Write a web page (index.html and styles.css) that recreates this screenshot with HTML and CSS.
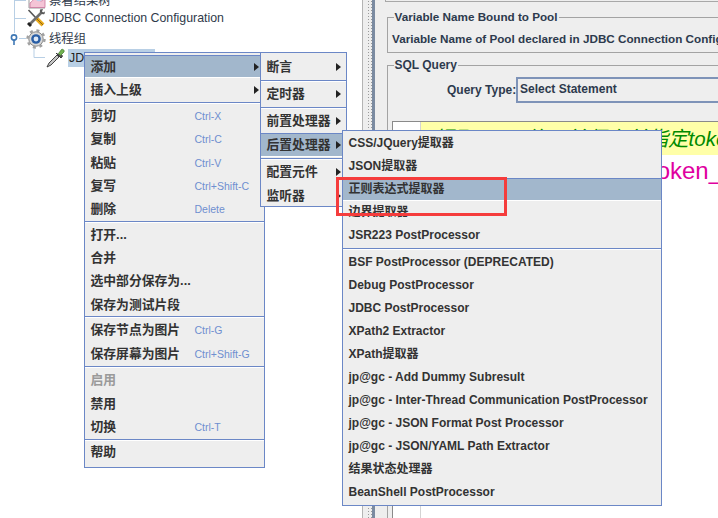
FILE: index.html
```html
<!DOCTYPE html>
<html lang="zh">
<head>
<meta charset="utf-8">
<title>JMeter</title>
<link rel="stylesheet" href="styles.css">
</head>
<body>
<div class="app">
  <section class="tree">
    <svg class="tree-lines" width="70" height="70" viewBox="0 0 70 70">
      <path d="M14.500 0V33M14.500 0.500H26M14.500 18.500H26M19 38.500H26M34 45V57.500H45" fill="none" stroke="#b8cfe5"/>
      <circle cx="14" cy="37.500" r="2.600" fill="#fff" stroke="#3f78b5" stroke-width="1.600"/>
      <path d="M14 40V45" stroke="#3f78b5" stroke-width="1.600"/>
    </svg>
    <div class="row row-chart">
      <svg class="ico" width="18" height="18" viewBox="0 0 18 18"><path d="M1 2V16H17" fill="none" stroke="#9a9a9a"/><path d="M2 15.500V11C5 9 6 6 8 6s3 3 5 3 3-2 4-3V15.500z" fill="#f4c4d6" stroke="#c9749a" stroke-width=".8"/><circle cx="11" cy="6" r="3.200" fill="#bcd3ee"/></svg>
      <span>察看结果树</span>
    </div>
    <div class="row row-jdbc">
      <svg class="ico" width="20" height="20" viewBox="0 0 20 20">
        <path d="M2.500 2L10 10" stroke="#555" stroke-width="1.600"/>
        <path d="M9.500 9.500l7.500 7.500" stroke="#e8a91c" stroke-width="4"/>
        <path d="M9.500 9.500l7.500 7.500" stroke="#6b4b08" stroke-width=".7"/>
        <path d="M16 4L3 17" stroke="#6e6e6e" stroke-width="2.600"/>
        <path d="M14 1.500a3.500 3.500 0 0 0 4.500 4.500l.5-2.500-2 1-1-1 1-2.500z" fill="#5a5a5a"/>
        <path d="M1 16l3 3 2-2-3-3z" fill="#222"/>
      </svg>
      <span>JDBC Connection Configuration</span>
    </div>
    <div class="row row-group">
      <svg class="ico" width="20" height="20" viewBox="0 0 20 20">
        <circle cx="10" cy="10" r="7.200" fill="#d8d8d8" stroke="#8a8a8a" stroke-width="1"/>
        <circle cx="10" cy="10" r="8.500" fill="none" stroke="#a0a0a0" stroke-width="2.400" stroke-dasharray="3 3.700"/>
        <circle cx="10" cy="10" r="4.800" fill="#2a5fa6"/><circle cx="10" cy="10" r="2.400" fill="#dfe9f6"/>
      </svg>
      <span>线程组</span>
    </div>
    <div class="row row-sel">
      <svg class="ico" width="20" height="20" viewBox="0 0 20 20">
        <path d="M1 19l2-4L11 7l2 2-8 8z" fill="#c4c4c4" stroke="#333" stroke-width=".9"/>
        <path d="M10 5l5 5 1.500-2L15 6.500" fill="#555" stroke="#333"/>
        <path d="M12.500 5.500l2 2 3.500-3.500c.8-1.500-1-3.300-2.500-2.500z" fill="#72b252" stroke="#3f7a2c" stroke-width=".7"/>
      </svg>
      <span class="sel">JDBC Request</span>
    </div>
  </section>
  <div class="divider"><div class="dots"></div><div class="bar"></div></div>
  <main class="panel">
    <div class="top-box"></div>
    <fieldset class="group group-var">
      <legend>Variable Name Bound to Pool</legend>
      <div class="var-line">Variable Name of Pool declared in JDBC Connection Configuration</div>
    </fieldset>
    <fieldset class="group group-sql">
      <legend>SQL Query</legend>
      <div class="query-row">
        <label class="query-label">Query Type:</label>
        <div class="combo">Select Statement</div>
      </div>
      <div class="editor">
        <div class="gutter"></div>
        <div class="code">
          <div class="line-comment">//提取token值，并保存并指定token</div>
          <div class="line-var">token_name</div>
        </div>
      </div>
    </fieldset>
  </main>
</div>

<div class="menu menu-main">
  <div class="item active"><span class="label">添加</span><i class="arrow"></i></div>
  <div class="item"><span class="label">插入上级</span><i class="arrow"></i></div>
  <div class="sep"></div>
  <div class="item"><span class="label">剪切</span><span class="key">Ctrl-X</span></div>
  <div class="item"><span class="label">复制</span><span class="key">Ctrl-C</span></div>
  <div class="item"><span class="label">粘贴</span><span class="key">Ctrl-V</span></div>
  <div class="item"><span class="label">复写</span><span class="key">Ctrl+Shift-C</span></div>
  <div class="item"><span class="label">删除</span><span class="key">Delete</span></div>
  <div class="sep"></div>
  <div class="item"><span class="label">打开...</span></div>
  <div class="item"><span class="label">合并</span></div>
  <div class="item"><span class="label">选中部分保存为...</span></div>
  <div class="item"><span class="label">保存为测试片段</span></div>
  <div class="sep"></div>
  <div class="item"><span class="label">保存节点为图片</span><span class="key">Ctrl-G</span></div>
  <div class="item"><span class="label">保存屏幕为图片</span><span class="key">Ctrl+Shift-G</span></div>
  <div class="sep sep-low"></div>
  <div class="item disabled"><span class="label">启用</span></div>
  <div class="item"><span class="label">禁用</span></div>
  <div class="item"><span class="label">切换</span><span class="key">Ctrl-T</span></div>
  <div class="sep"></div>
  <div class="item"><span class="label">帮助</span></div>
</div>

<div class="menu menu-sub">
  <div class="item"><span class="label">断言</span><i class="arrow"></i></div>
  <div class="sep"></div>
  <div class="item"><span class="label">定时器</span><i class="arrow"></i></div>
  <div class="sep"></div>
  <div class="item"><span class="label">前置处理器</span><i class="arrow"></i></div>
  <div class="item active"><span class="label">后置处理器</span><i class="arrow"></i></div>
  <div class="sep"></div>
  <div class="item"><span class="label">配置元件</span><i class="arrow"></i></div>
  <div class="item"><span class="label">监听器</span><i class="arrow"></i></div>
</div>

<div class="menu menu-post">
  <div class="item"><span class="label">CSS/JQuery提取器</span></div>
  <div class="item"><span class="label">JSON提取器</span></div>
  <div class="item active"><span class="label">正则表达式提取器</span></div>
  <div class="item"><span class="label">边界提取器</span></div>
  <div class="item"><span class="label">JSR223 PostProcessor</span></div>
  <div class="sep"></div>
  <div class="item"><span class="label">BSF PostProcessor (DEPRECATED)</span></div>
  <div class="item"><span class="label">Debug PostProcessor</span></div>
  <div class="item"><span class="label">JDBC PostProcessor</span></div>
  <div class="item"><span class="label">XPath2 Extractor</span></div>
  <div class="item"><span class="label">XPath提取器</span></div>
  <div class="item"><span class="label">jp@gc - Add Dummy Subresult</span></div>
  <div class="item"><span class="label">jp@gc - Inter-Thread Communication PostProcessor</span></div>
  <div class="item"><span class="label">jp@gc - JSON Format Post Processor</span></div>
  <div class="item"><span class="label">jp@gc - JSON/YAML Path Extractor</span></div>
  <div class="item"><span class="label">结果状态处理器</span></div>
  <div class="item"><span class="label">BeanShell PostProcessor</span></div>
</div>

<div class="callout"></div>
</body>
</html>
```

FILE: styles.css
```css
* { box-sizing: border-box; }
html, body { margin: 0; padding: 0; }
body {
  width: 718px;
  height: 518px;
  overflow: hidden;
  background: #fff;
  color: #333;
  font-family: "Liberation Sans", "Noto Sans CJK SC", sans-serif;
  position: relative;
}
.app { display: flex; width: 718px; height: 518px; }

/* tree */
.tree {
  width: 363px;
  flex: none;
  position: relative;
  background: #fff;
  border-right: 1px solid #b4b4b4;
  font-size: 12.350px;
  line-height: 16px;
  color: #2f3a4a;
  margin-top: -6px;
}
.tree-lines { position: absolute; left: 0; top: 6px; }
.row { display: flex; align-items: center; position: relative; }
.row span { white-space: nowrap; }
.ico { flex: none; }
.row-chart { height: 13px; margin-bottom: 2px; padding-left: 28px; gap: 3px; }
.row-jdbc { height: 18px; padding-left: 26px; gap: 3px; }
.row-group { height: 18.500px; margin-top: 2.500px; padding-left: 26px; gap: 3px; }
.row-sel { height: 19px; padding-left: 46px; gap: 2px; }
.sel { background: #b8cfe5; padding: 1px 4px 1px 1px; color: #222; }

/* divider */
.divider { width: 12px; flex: none; display: flex; background: #eee; padding-left: 4px; }
.dots {
  width: 5px;
  background-image: radial-gradient(circle, #9a9a9a 0.6px, transparent 0.8px);
  background-size: 3px 3px;
}
.bar { width: 3px; background: #7b8ba1; }

/* right panel */
.panel { flex: 1; min-width: 0; background: #eee; padding: 0 0 0 12px; position: relative; overflow: hidden; }
.top-box { height: 2px; border-bottom: 1px solid #a8a8a8; border-left: 1px solid #a8a8a8; margin: 0 0 7px -2px; }
.group {
  margin: 0;
  padding: 0;
  border: 1px solid #a3a3a3;
  border-right-width: 0;
  min-width: 0;
  width: 400px;
  font-weight: bold;
  font-size: 12px;
  color: #2d3a4d;
}
.group legend { padding: 0 1px; margin-left: 5.500px; font-size: 11.700px; line-height: 16px; }
.group-sql legend { font-size: 12px; }
.group-var { height: 44px; margin-bottom: 4px; }
.var-line { padding: 7px 0 0 4px; white-space: nowrap; font-size: 11.700px; }
.group-sql { height: 470px; }
.query-row { display: flex; align-items: center; margin-top: 4px; padding-left: 59px; gap: 1px; }
.query-label { width: 68px; white-space: nowrap; }
.combo {
  width: 210px;
  height: 26px;
  border: 1px solid #7e93b8;
  border-width: 2px 1px 2px 2px;
  padding-left: 2px;
  line-height: 21px;
  background: #eee;
  white-space: nowrap;
}
.editor {
  display: flex;
  margin: 18px 0 0 4px;
  height: 420px;
  border-top: 1px solid #8a8a8a;
  border-left: 1px solid #8a8a8a;
  background: #fff;
  font-weight: normal;
}
.gutter { width: 28px; flex: none; border-right: 1px solid #d4d4d4; background: #fff; }
.code { flex: 1; min-width: 0; white-space: nowrap; overflow: hidden; }
.line-comment {
  background: #ffffa8;
  height: 33px;
  line-height: 34px;
  font-size: 20.500px;
  font-style: italic;
  color: #008a00;
  padding-left: 1px;
}
.line-var { font-size: 24px; line-height: 31px; color: #e000a0; padding-left: 229px; font-family: "Liberation Sans", sans-serif; }

/* menus */
.menu {
  position: absolute;
  background: #eee;
  border: 1.500px solid #6b87c6;
  font-size: 12px;
  line-height: 16px;
  font-weight: bold;
  color: #333;
}
.item { display: flex; align-items: center; position: relative; white-space: nowrap; border-top: 1px solid transparent; border-bottom: 1px solid transparent; }
.item.active { background: #a2b7cc; border-top-color: #6b87c6; border-bottom-color: #fff; }
.item.disabled { color: #9a9a9a; }
.sep { height: 2px; border-top: 1px solid #6b87c6; border-bottom: 1px solid #fff; }
.sep-low { margin-top: 1.300px; }
.key { font-weight: normal; font-size: 10.500px; color: #6f8fd0; position: absolute; left: 109.500px; }
.arrow {
  position: absolute;
  width: 0;
  height: 0;
  border-left: 5px solid #222;
  border-top: 4.500px solid transparent;
  border-bottom: 4.500px solid transparent;
}

.menu-main { left: 84px; top: 52px; width: 181px; height: 416px; padding: 2px 0 0; z-index: 1; }
.menu-main .item { height: 23.400px; padding: 0.500px 0 0 5.500px; font-size: 12.800px; }
.menu-main .arrow { left: 168.500px; }
.menu-sub { left: 260px; top: 52px; width: 87px; height: 155px; padding: 2px 0 0; z-index: 2; }
.menu-sub .item { height: 24px; padding-left: 5.500px; font-size: 12.800px; }
.menu-sub .sep { margin-top: 1px; }
.menu-sub .arrow { left: 75px; }
.menu-post { left: 342px; top: 130px; width: 320px; height: 376px; padding: 0.500px 0 0; z-index: 3; }
.menu-post .item { height: 23px; padding: 0 0 0 5.500px; }
.menu-post .sep { margin: 1px 0; }

.callout {
  position: absolute;
  left: 336px;
  top: 177px;
  width: 171px;
  height: 39px;
  border: 3px solid #f53c3c;
  z-index: 4;
}
```
